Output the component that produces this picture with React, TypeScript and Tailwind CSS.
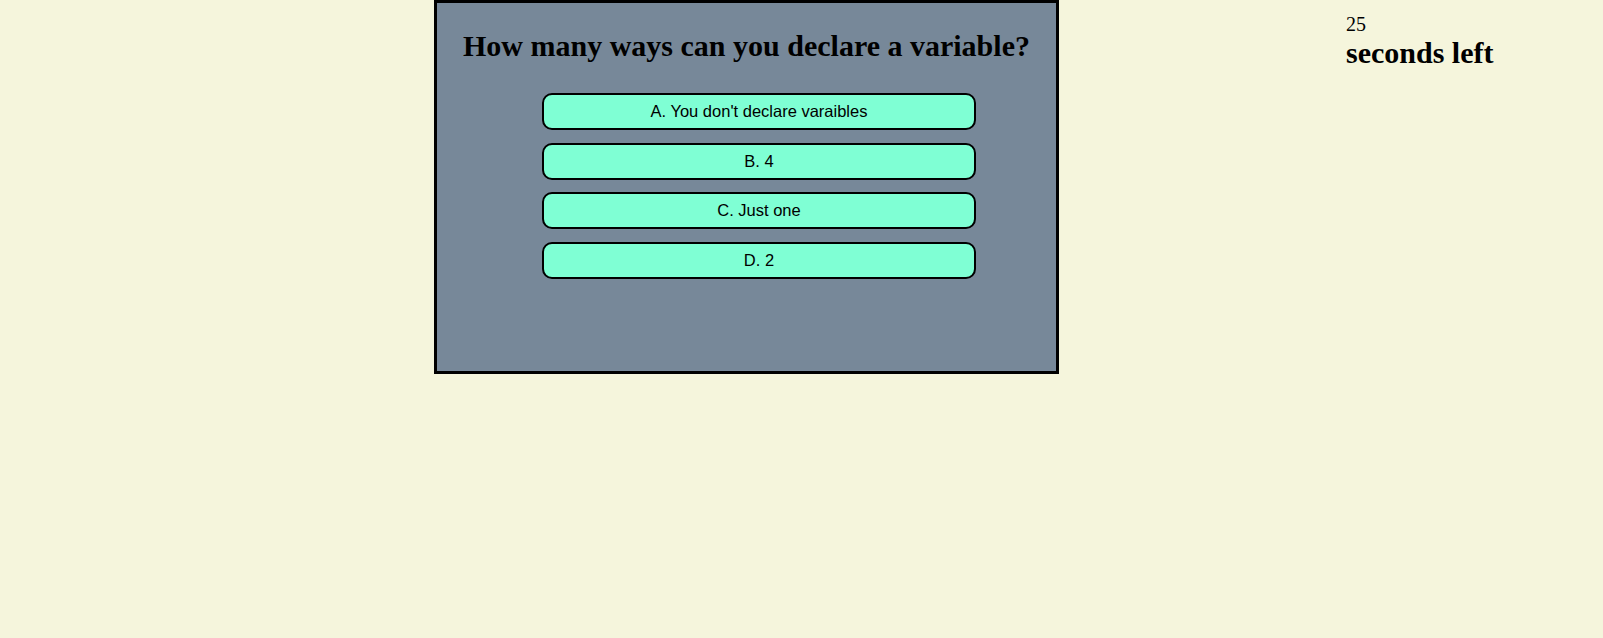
import React from 'react';

const answers = [
  "A. You don't declare varaibles",
  'B. 4',
  'C. Just one',
  'D. 2',
];

export default function App() {
  return (
    <div className="min-h-[638px] w-full bg-[#f5f5dc] font-['Liberation_Serif',serif] text-black">
      <div className="flex items-start">
        {/* Quiz card */}
        <div className="ml-[434px] h-[374px] w-[625px] border-[3px] border-black bg-[#778899]">
          <h1 className="mt-[25px] text-center text-[30px] leading-[36px] font-bold">
            How many ways can you declare a variable?
          </h1>
          <div className="mt-[29px] flex flex-col gap-[12.5px] pl-[105px] pr-[80px]">
            {answers.map((a) => (
              <button
                key={a}
                className="h-[37px] w-full rounded-[10px] border-2 border-black bg-[#7fffd4] font-['Liberation_Sans',Arial,sans-serif] text-[16.5px] text-black"
              >
                {a}
              </button>
            ))}
          </div>
        </div>

        {/* Timer */}
        <div className="ml-[287px] pt-[13px]">
          <div className="text-[20px] leading-[23px]">25</div>
          <div className="text-[30px] leading-[34px] font-bold">seconds left</div>
        </div>
      </div>
    </div>
  );
}
